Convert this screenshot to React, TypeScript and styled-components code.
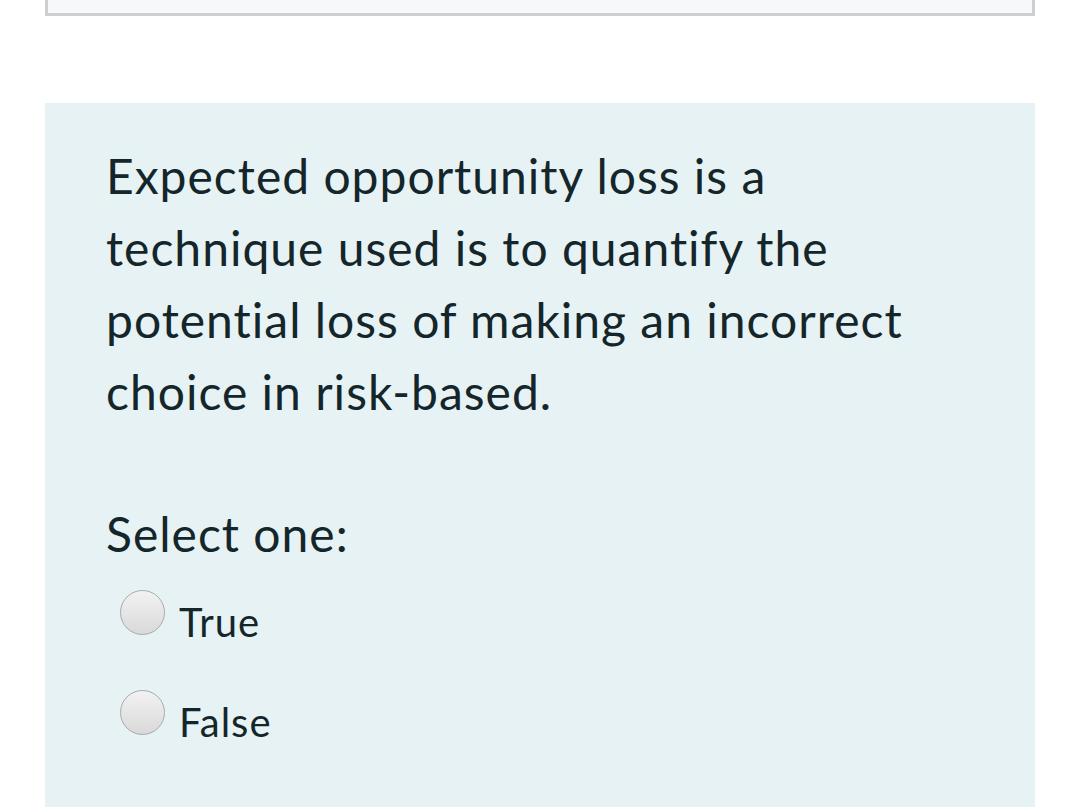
import React from "react";
import styled, { createGlobalStyle } from "styled-components";

const GlobalStyle = createGlobalStyle`
  body {
    margin: 0;
    background: #ffffff;
    font-family: Lato, "Noto Sans", sans-serif;
  }
`;

const Page = styled.div`
  width: 1068px;
  height: 807px;
  overflow: hidden;
`;

const PrevCard = styled.div`
  margin: 0 33px 0 45px;
  height: 13px;
  background: #f6f8fa;
  border: 3px solid #cdcfd1;
  border-top: none;
`;

const QuestionPanel = styled.div`
  margin: 87px 33px 0 45px;
  height: 720px;
  background: #e6f2f4;
  padding: 37px 0 0 61px;
  box-sizing: border-box;
  color: #15262b;
  letter-spacing: 1px;
`;

const QuestionText = styled.p`
  margin: 0;
  width: 860px;
  font-size: 48px;
  line-height: 72px;
`;

const Prompt = styled.div`
  margin-top: 70px;
  font-size: 48px;
  line-height: 72px;
`;

const Options = styled.div`
  display: flex;
  flex-direction: column;
  gap: 52px;
  margin-top: 28px;
  padding-left: 14px;
`;

const OptionRow = styled.label`
  display: flex;
  align-items: center;
  gap: 14px;
  font-size: 40px;
  line-height: 48px;
`;

const Radio = styled.span`
  width: 43px;
  height: 43px;
  border-radius: 50%;
  border: 1px solid #a9abac;
  background: linear-gradient(#f2f2f2, #d9d9d9);
  flex-shrink: 0;
  margin-top: -20px;
`;

const options = ["True", "False"];

export default function App() {
  return (
    <Page>
      <GlobalStyle />
      <PrevCard />
      <QuestionPanel>
        <QuestionText>
          Expected opportunity loss is a technique used is to quantify the
          potential loss of making an incorrect choice in risk-based.
        </QuestionText>
        <Prompt>Select one:</Prompt>
        <Options>
          {options.map((o) => (
            <OptionRow key={o}>
              <Radio />
              {o}
            </OptionRow>
          ))}
        </Options>
      </QuestionPanel>
    </Page>
  );
}
